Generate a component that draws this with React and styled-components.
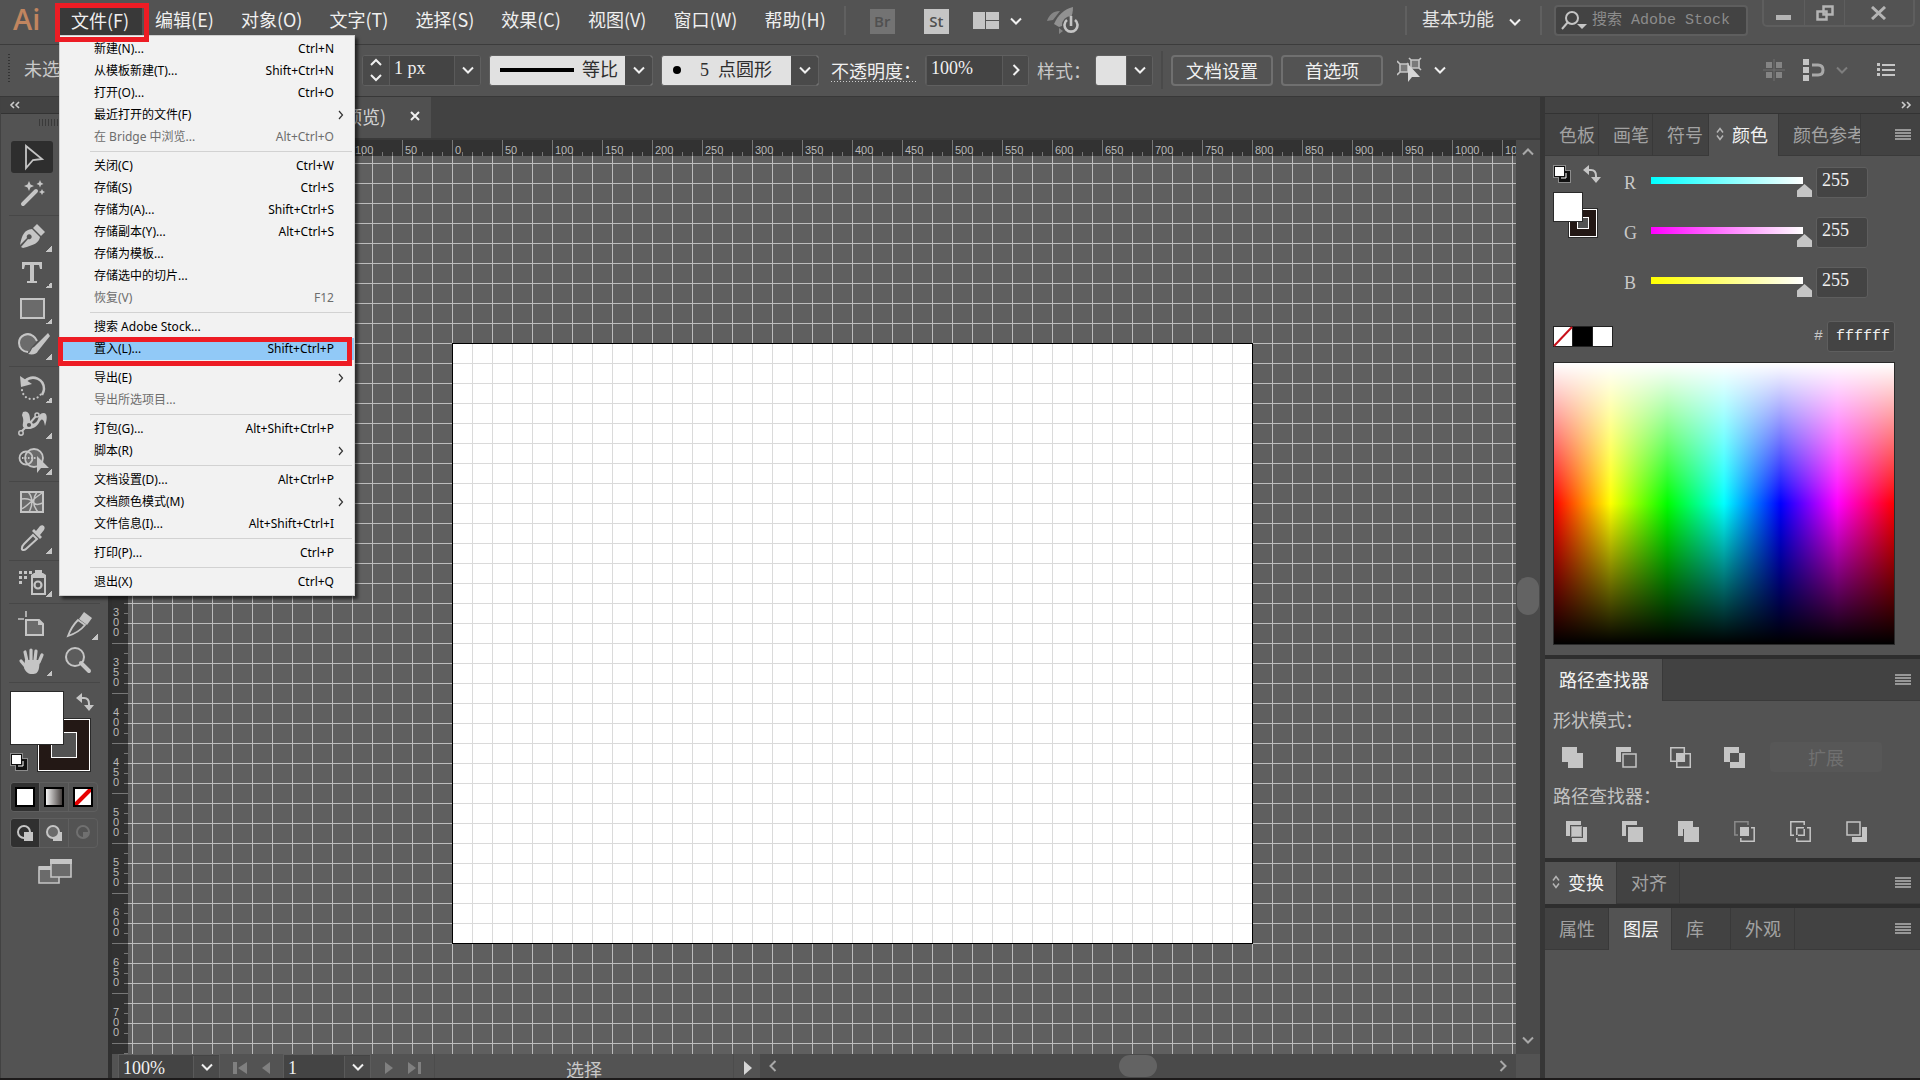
import React, { useState } from 'react';
import styled, { createGlobalStyle, css } from 'styled-components';

const FILE_MENU = [
  [
    { label: '新建(N)...', keys: 'Ctrl+N' },
    { label: '从模板新建(T)...', keys: 'Shift+Ctrl+N' },
    { label: '打开(O)...', keys: 'Ctrl+O' },
    { label: '最近打开的文件(F)', sub: true },
    { label: '在 Bridge 中浏览...', keys: 'Alt+Ctrl+O', off: true },
  ],
  [
    { label: '关闭(C)', keys: 'Ctrl+W' },
    { label: '存储(S)', keys: 'Ctrl+S' },
    { label: '存储为(A)...', keys: 'Shift+Ctrl+S' },
    { label: '存储副本(Y)...', keys: 'Alt+Ctrl+S' },
    { label: '存储为模板...' },
    { label: '存储选中的切片...' },
    { label: '恢复(V)', keys: 'F12', off: true },
  ],
  [
    { label: '搜索 Adobe Stock...' },
    { label: '置入(L)...', keys: 'Shift+Ctrl+P', marked: true },
  ],
  [
    { label: '导出(E)', sub: true },
    { label: '导出所选项目...', off: true },
  ],
  [
    { label: '打包(G)...', keys: 'Alt+Shift+Ctrl+P' },
    { label: '脚本(R)', sub: true },
  ],
  [
    { label: '文档设置(D)...', keys: 'Alt+Ctrl+P' },
    { label: '文档颜色模式(M)', sub: true },
    { label: '文件信息(I)...', keys: 'Alt+Shift+Ctrl+I' },
  ],
  [{ label: '打印(P)...', keys: 'Ctrl+P' }],
  [{ label: '退出(X)', keys: 'Ctrl+Q' }],
];

const MENUS = [
  '编辑(E)',
  '对象(O)',
  '文字(T)',
  '选择(S)',
  '效果(C)',
  '视图(V)',
  '窗口(W)',
  '帮助(H)',
];

const X_LABELS = Array.from({ length: 48 }, (_, i) => Math.abs(i * 50 - 350));
const Y_LABELS = Array.from({ length: 30 }, (_, i) => Math.abs(i * 50 - 150));

const CHANNELS = [
  { name: 'R', from: '#00ffff' },
  { name: 'G', from: '#ff00ff' },
  { name: 'B', from: '#ffff00' },
];

/* ---------- icons ---------- */

const Icon = ({ w, h, children, ...rest }) => (
  <svg width={w} height={h} viewBox={`0 0 ${w} ${h}`} fill='none' aria-hidden='true' {...rest}>
    {children}
  </svg>
);

const C = '#c5c5c5';

const Chevron = ({ color = '#f0f0f0' }) => (
  <Icon w={14} h={10}>
    <path d='M2 2.5l5 5 5-5' stroke={color} strokeWidth='2' />
  </Icon>
);

const ThinChevron = ({ turn = 0, color = '#a8a8a8' }) => (
  <Icon w={14} h={14}>
    <path d='M2 9.5l5-5 5 5' stroke={color} strokeWidth='2' transform={`rotate(${turn} 7 7)`} />
  </Icon>
);

const SwapIcon = () => (
  <Icon w={18} h={18}>
    <path d='M5 5h3q5 0 5 6v2' stroke={C} strokeWidth='2' />
    <path d='M0 5l6-5v10zM8 12h10l-5 6z' fill={C} />
  </Icon>
);

const DefaultsIcon = () => (
  <Icon w={18} h={18}>
    <path d='M0 0h13v5h5v13H5v-5H0z' fill='#8c8c8c' />
    <rect x='6' y='6' width='11' height='11' fill='#111' />
    <path d='M13 8v5H8' stroke='#fff' />
    <rect x='1' y='1' width='11' height='11' fill='#111' />
    <rect x='2' y='2' width='9' height='9' fill='#fff' />
  </Icon>
);

const ListIcon = () => (
  <Icon w={16} h={12}>
    <path d='M0 1h16M0 4h16M0 7h16M0 10h16' stroke='#b4b4b4' strokeWidth='1.4' />
  </Icon>
);

const TOOL_ART = {
  select: <path d='M12 6v22l7-8 9-1z' stroke={C} strokeWidth='1.8' />,
  wand: (
    <>
      <path d='M9 28L22 15' stroke={C} strokeWidth='4' strokeLinecap='round' />
      <path
        d='M15 5l1.5 3.5L20 10l-3.500 1.500L15 15l-1.500-3.500L10 10l3.500-1.500zM26 4l1 2.500L29.500 8 27 9l-1 2.500L25 9l-2.500-1L25 6.500zM28 13l1 2 2 1-2 1-1 2-1-2-2-1 2-1z'
        fill={C}
      />
    </>
  ),
  pen: (
    <>
      <path d='M23 5l8 8-4 4-8-8z' fill={C} />
      <path d='M18 10l8 8c-1 6-6 8-17 11L7 28l7-8a2.500 2.500 0 1 0-1-1l-7 7C8 16 10 11 18 10z' fill={C} />
    </>
  ),
  type: <path d='M8 7h20v7h-2l-1-4h-5v16h3v2h-10v-2h3V10h-5l-1 4H8z' fill={C} />,
  rect: <rect x='7' y='8' width='23' height='19' fill='#6b6b6b' stroke={C} strokeWidth='2' />,
  brush: (
    <>
      <path
        d='M15 25c-6 1-11-4-10-10 1-7 8-10 13-7 3 1 4 4 5 6l-6 7z'
        fill='#6b6b6b'
      />
      <path
        d='M14 25c-5 0-9-4-9-9 0-8 9-11 14-7 2 1 3 3 4 5'
        stroke={C}
        strokeWidth='2'
      />
      <path d='M34 6L20 20c-3 1-2 4-6 7 5 1 9 0 10-3L36 9z' fill={C} />
    </>
  ),
  rotate: (
    <>
      <path d='M11 11c8-7 19-2 19 8 0 2-1 4-2 6' stroke={C} strokeWidth='2.500' />
      <path d='M6 6l1 11 11-3z' fill={C} />
      <path
        d='M8 20c1 6 5 9 10 9 4 0 7-2 9-5'
        stroke={C}
        strokeWidth='2.200'
        strokeDasharray='0.100 4'
        strokeLinecap='round'
      />
    </>
  ),
  warp: (
    <>
      <path
        d='M9 6c4-2 7 1 7 7 0 4 2 6 5 4 5-3 2-10 9-10 4 1 3 7 1 13-1-7-3-8-5-5-2 4-5 8-12 8-4 0-6-2-5-6 1-5-1-7-1-8z'
        fill={C}
      />
      <path d='M7 26l8-8 8-9' stroke={C} strokeWidth='2' />
      <circle cx='7' cy='27' r='2.200' fill='#535353' stroke={C} strokeWidth='1.500' />
      <circle cx='15' cy='19' r='3' fill='#535353' stroke={C} strokeWidth='1.800' />
      <circle cx='23' cy='9' r='2' fill='#535353' stroke={C} strokeWidth='1.500' />
    </>
  ),
  builder: (
    <>
      <circle cx='20' cy='16' r='9' fill='#6b6b6b' stroke={C} strokeWidth='1.800' />
      <circle cx='12' cy='16' r='6.500' stroke={C} strokeWidth='1.800' />
      <path d='M8 16h15' stroke={C} strokeWidth='2' strokeDasharray='1.500 1.500' />
      <path d='M23 14v17l4-5h8z' fill={C} />
    </>
  ),
  mesh: (
    <>
      <rect x='7' y='7' width='22' height='20' fill='#6b6b6b' stroke={C} strokeWidth='2' />
      <path
        d='M7 14c7-1 11 1 13 4s5 1 9 0M14 7c5 5 5 13 1 20M23 7c-5 7-4 14 1 20M7 24c6-2 9-8 21-16'
        stroke={C}
        strokeWidth='1.500'
      />
    </>
  ),
  dropper: (
    <>
      <path d='M19 14l4 4-11 10c-2 2-5 1-4-1 0-2 1-3 2-4z' stroke={C} strokeWidth='2' />
      <path d='M18 10l2-2 2 2 4-5c3-2 6 1 4 4l-4 5 2 2-2 2z' fill={C} />
    </>
  ),
  spray: (
    <>
      <rect x='18' y='13' width='13' height='17' stroke={C} strokeWidth='2' />
      <path d='M17 13v-2l3-2h9l3 2v2zM21 6h7v4h-7z' fill={C} />
      <circle cx='24' cy='21' r='3.500' stroke={C} strokeWidth='2.200' />
      <path
        d='M5 7h3v3H5zM10 7h3v3h-3zM15 7h3v3h-3zM5 12h3v3H5zM10 12h3v3h-3zM5 17h3v3H5z'
        fill={C}
      />
    </>
  ),
  artboard: (
    <>
      <path d='M12 4v6M4 12h6' stroke={C} strokeWidth='1.600' />
      <path d='M12 13h13l4 4v11H12z' fill='#6b6b6b' stroke={C} strokeWidth='2' />
      <path d='M24 12v6h6z' fill={C} />
    </>
  ),
  slice: (
    <>
      <path d='M24 5l8 6-5 7-8-6z' fill={C} />
      <path d='M18 13l7 5c-4 5-8 8-17 11 3-8 6-12 10-16z' stroke={C} strokeWidth='1.800' />
    </>
  ),
  hand: (
    <>
      <path
        d='M13 18L11 9M17 17V7M21 17l1-9M25 19l3-7M12 24l-5-6'
        stroke={C}
        strokeWidth='3.200'
        strokeLinecap='round'
      />
      <path d='M11 17h15l-1 8c-1 5-3 6-7 6s-6-2-8-6z' fill={C} />
    </>
  ),
  zoom: (
    <>
      <circle cx='15' cy='14' r='9' fill='#5c5c5c' stroke={C} strokeWidth='2' />
      <path d='M21 20l8 8' stroke={C} strokeWidth='4' strokeLinecap='round' />
    </>
  ),
};

const ToolButton = ({ name, label, more, active }) => (
  <Tool type='button' aria-label={label} $active={active}>
    <Icon w={36} h={34}>{TOOL_ART[name]}</Icon>
    {more && <Corner />}
  </Tool>
);

const TOOLS = [
  [
    { name: 'select', label: '选择工具', active: true },
    { name: 'wand', label: '魔棒工具' },
  ],
  [
    { name: 'pen', label: '钢笔工具', more: true },
    { name: 'type', label: '文字工具', more: true },
    { name: 'rect', label: '矩形工具', more: true },
    { name: 'brush', label: '斑点画笔工具', more: true },
  ],
  [
    { name: 'rotate', label: '旋转工具', more: true },
    { name: 'warp', label: '宽度工具', more: true },
    { name: 'builder', label: '形状生成器工具', more: true },
  ],
  [
    { name: 'mesh', label: '网格工具' },
    { name: 'dropper', label: '吸管工具', more: true },
  ],
  [{ name: 'spray', label: '符号喷枪工具', more: true }],
];

const PATH_ART = {
  unite: <path d='M0 0h15v6h6v15H6v-6H0z' fill={C} />,
  minus: (
    <>
      <path d='M0 0h15v5H5v10H0z' fill={C} />
      <rect x='7' y='7' width='13' height='13' stroke={C} strokeWidth='1.500' />
    </>
  ),
  intersect: (
    <>
      <path d='M.8.8h13.500v13.500H.800zM6.800 6.800h13.500v13.500H6.800z' stroke={C} strokeWidth='1.500' />
      <rect x='6' y='6' width='9' height='9' fill={C} />
    </>
  ),
  exclude: <path d='M0 0h15v6h6v15H6v-6H0zM6 6v9h9V6z' fill={C} fillRule='evenodd' />,
  divide: (
    <>
      <path d='M0 0h15v4H4v11H0zM21 6h-4v11H6v4h15z' fill={C} />
      <rect x='5.500' y='5.500' width='10' height='10' fill={C} stroke='#a0a0a0' />
    </>
  ),
  trim: <path d='M0 0h15v4H4v11H0zM6 6h15v15H6z' fill={C} />,
  merge: <path d='M0 0h15v6h6v15H6V8H5v7H0z' fill={C} />,
  crop: (
    <>
      <path d='M14 4V.800H.800V14H4' stroke='#8a8a8a' strokeWidth='1.500' />
      <rect x='6' y='6' width='9' height='9' fill={C} />
      <path d='M17 6.800h3.200v13.400H6.800V17' stroke={C} strokeWidth='1.500' />
    </>
  ),
  outline: (
    <path
      d='M14.200 4V.800H.800v13.400H4M17 6.800h3.200v13.400H6.800V17M6.800 14V6.800H14M14.200 8v6.200H8'
      stroke={C}
      strokeWidth='1.500'
    />
  ),
  back: (
    <>
      <path d='M16 6h5v15H6v-5h10z' fill={C} />
      <rect x='1' y='1' width='13' height='13' fill='#535353' stroke={C} strokeWidth='1.500' />
    </>
  ),
};

const SHAPE_MODES = [
  ['unite', '联集'],
  ['minus', '减去顶层'],
  ['intersect', '交集'],
  ['exclude', '差集'],
];

const PATHFINDERS = [
  ['divide', '分割'],
  ['trim', '修边'],
  ['merge', '合并'],
  ['crop', '裁剪'],
  ['outline', '轮廓'],
  ['back', '减去后方对象'],
];

const DIAMOND = (
  <Icon w={8} h={14}>
    <path d='M1 5.500l3-4 3 4M1 8.500l3 4 3-4' stroke='#b4b4b4' strokeWidth='1.500' />
  </Icon>
);

/* ---------- page ---------- */

function FileMenu() {
  return (
    <Menu>
      {FILE_MENU.map((group, g) => (
        <MenuGroup key={g}>
          {group.map(item => (
            <MenuRow key={item.label} type='button' disabled={item.off} $marked={item.marked}>
              <span>{item.label}</span>
              {item.keys && <Keys>{item.keys}</Keys>}
              {item.sub && (
                <SubArrow>
                  <Icon w={6} h={10}>
                    <path d='M1 1l3.500 4L1 9' stroke='#333' strokeWidth='1.200' />
                  </Icon>
                </SubArrow>
              )}
            </MenuRow>
          ))}
        </MenuGroup>
      ))}
    </Menu>
  );
}

function TopBar() {
  return (
    <MenuBar>
      <Logo>Ai</Logo>
      <OpenMenuButton type='button'>文件(F)</OpenMenuButton>
      {MENUS.map(m => (
        <MenuButton key={m} type='button'>
          {m}
        </MenuButton>
      ))}
      <Divider $lead />
      <AppGroup>
        <AppBadge type='button' $dim>
          Br
        </AppBadge>
        <AppBadge type='button'>St</AppBadge>
        <PlainButton type='button' aria-label='排列文档'>
          <Icon w={26} h={18}>
            <path d='M0 0h12v17H0zM13 0h13v8H13zM13 9h13v8H13z' fill={C} />
          </Icon>
          <Chevron />
        </PlainButton>
        <PlainButton type='button' aria-label='GPU 性能'>
          <Icon w={32} h={28}>
            <path d='M26 0c-9 2-15 8-19 17l5 3 3-1c8-3 11-10 11-19z' fill='#919191' />
            <path d='M13 4C6 4 2 8 0 14l6-1zM12 21v6l4-3z' fill='#858585' />
            <circle cx='24' cy='18' r='9' fill='#535353' />
            <path d='M20 13a6.500 6.500 0 1 0 8 0M24 9v10' stroke={C} strokeWidth='2.600' />
          </Icon>
        </PlainButton>
      </AppGroup>
      <Spacer />
      <Divider />
      <Workspace>
        <select aria-label='工作区'>
          <option>基本功能</option>
        </select>
        <Chevron />
      </Workspace>
      <Divider />
      <Search>
        <Icon w={28} h={20}>
          <circle cx='12' cy='7' r='6' stroke={C} strokeWidth='2' />
          <path d='M8 11l-6 7' stroke={C} strokeWidth='2' />
          <path d='M17 13h10l-5 5z' fill={C} />
        </Icon>
        <input type='text' placeholder='搜索 Adobe Stock' aria-label='搜索 Adobe Stock' />
      </Search>
      <WindowButtons>
        <button type='button' aria-label='最小化'>
          <Icon w={16} h={14}>
            <path d='M0 9h15v5H0z' fill='#b4b4b4' />
          </Icon>
        </button>
        <button type='button' aria-label='还原'>
          <Icon w={18} h={16}>
            <path d='M7.500 1.500h9v8h-9zM1.500 6.500h9v8h-9z' stroke='#b4b4b4' strokeWidth='2.500' />
          </Icon>
        </button>
        <button type='button' aria-label='关闭'>
          <Icon w={16} h={14}>
            <path d='M1 1l13 12M14 1L1 13' stroke='#b4b4b4' strokeWidth='3' />
          </Icon>
        </button>
      </WindowButtons>
      <FileMenu />
    </MenuBar>
  );
}

function ControlBar() {
  return (
    <Controls>
      <Selection>
        <Grip />
        未选择对象
      </Selection>
      <Combo>
        <Stepper type='button' aria-label='调整描边粗细'>
          <Icon w={12} h={24}>
            <path d='M1 7l5-5 5 5M1 17l5 5 5-5' stroke='#f0f0f0' strokeWidth='2' />
          </Icon>
        </Stepper>
        <ComboInput $w={65} defaultValue='1 px' aria-label='描边粗细' />
        <ComboArrow type='button' aria-label='描边粗细列表'>
          <Chevron />
        </ComboArrow>
      </Combo>
      <LightSelect $w={164}>
        <Icon w={92} h={6}>
          <path d='M10 3h74' stroke='#000' strokeWidth='4' />
        </Icon>
        <select aria-label='宽度配置文件'>
          <option>等比</option>
        </select>
        <i>
          <Chevron />
        </i>
      </LightSelect>
      <LightSelect $w={158}>
        <Icon w={38} h={10}>
          <circle cx='15' cy='5' r='4' fill='#000' />
        </Icon>
        <select aria-label='画笔定义'>
          <option>5&ensp;点圆形</option>
        </select>
        <i>
          <Chevron />
        </i>
      </LightSelect>
      <Field $lead>
        <DottedLabel htmlFor='opacity'>不透明度：</DottedLabel>
        <Combo>
          <ComboInput $w={76} id='opacity' defaultValue='100%' />
          <ComboArrow type='button' aria-label='不透明度滑块'>
            <ThinChevron turn={90} color='#f0f0f0' />
          </ComboArrow>
        </Combo>
      </Field>
      <Field>
        <span>样式：</span>
        <Combo>
          <StyleSwatch />
          <ComboArrow type='button' aria-label='图形样式'>
            <Chevron />
          </ComboArrow>
        </Combo>
      </Field>
      <Divider $dark />
      <OutlineButton type='button'>文档设置</OutlineButton>
      <OutlineButton type='button'>首选项</OutlineButton>
      <PlainButton type='button' aria-label='选择相似对象' $lead>
        <Icon w={26} h={26}>
          <path d='M3 7h8v8H3zM14 3h8v8h-8z' fill='#7a7a7a' stroke={C} strokeWidth='1.600' />
          <path
            d='M0 4l3 3M0 18l3-3M11 7l-1-1M24 1l-2 2M12 1l2 2M24 13l-2-2'
            stroke={C}
            strokeWidth='1.600'
          />
          <path d='M11 7v18l4-5h8z' fill='#d6d6d6' />
        </Icon>
        <Chevron />
      </PlainButton>
      <Spacer />
      <RightIcons>
        <Icon w={22} h={22}>
          <path d='M3 3h6v6H3zM13 3h6v6h-6zM3 13h6v6H3zM13 13h6v6h-6z' fill='#848484' />
          <path d='M11 0v22M0 11h22' stroke='#707070' />
        </Icon>
        <PlainButton type='button' aria-label='对齐像素网格'>
          <Icon w={22} h={22}>
            <path d='M0 0h6v6H0zM0 8h6v6H0zM0 16h6v6H0z' fill={C} />
            <path d='M9 6h6q5 0 5 5t-5 5H9' stroke='#a8a8a8' strokeWidth='3' />
          </Icon>
          <Chevron color='#7e7e7e' />
        </PlainButton>
        <Icon w={18} h={14}>
          <path d='M0 0h3v3H0zM0 5h3v3H0zM0 10h3v3H0z' fill={C} />
          <path d='M5 2h13M5 7h13M5 12h13' stroke={C} strokeWidth='2' />
        </Icon>
      </RightIcons>
    </Controls>
  );
}

function ToolPanel() {
  return (
    <Tools>
      <PanelHead>
        <Icon w={12} h={8}>
          <path d='M5 1L2 4l3 3M10 1L7 4l3 3' stroke='#ccc' strokeWidth='1.600' />
        </Icon>
      </PanelHead>
      <GripRow />
      {TOOLS.map((group, i) => (
        <ToolGroup key={i}>
          {group.map(t => (
            <ToolButton key={t.name} {...t} />
          ))}
        </ToolGroup>
      ))}
      <ToolGroup $pairs>
        <ToolButton name='artboard' label='画板工具' />
        <ToolButton name='slice' label='切片工具' more />
        <ToolButton name='hand' label='抓手工具' more />
        <ToolButton name='zoom' label='缩放工具' />
      </ToolGroup>
      <Paint>
        <StrokeBox $size={52} $ring={12} />
        <FillBox $size={54} />
        <SwapSpot>
          <SwapIcon />
        </SwapSpot>
        <DefaultSpot>
          <DefaultsIcon />
        </DefaultSpot>
      </Paint>
      <ModeRow>
        <ModeCell type='button' aria-label='颜色' $active>
          <Icon w={20} h={20}>
            <path d='M1 1h18v18H1z' fill='#fff' stroke='#000' strokeWidth='2' />
          </Icon>
        </ModeCell>
        <ModeCell type='button' aria-label='渐变'>
          <Icon w={20} h={20}>
            <defs>
              <linearGradient id='toolGradient'>
                <stop offset='0' stopColor='#fff' />
                <stop offset='1' stopColor='#3a3432' />
              </linearGradient>
            </defs>
            <path d='M1 1h18v18H1z' fill='url(#toolGradient)' stroke='#000' strokeWidth='2' />
          </Icon>
        </ModeCell>
        <ModeCell type='button' aria-label='无'>
          <Icon w={20} h={20}>
            <path d='M1 1h18v18H1z' fill='#fff' />
            <path d='M2 18L18 2' stroke='#e60000' strokeWidth='4' />
            <path d='M1 1h18v18H1z' stroke='#000' strokeWidth='2' />
          </Icon>
        </ModeCell>
      </ModeRow>
      <ModeRow>
        <ModeCell type='button' aria-label='正常绘图' $active>
          <Icon w={18} h={18}>
            <circle cx='8' cy='8' r='6' stroke={C} strokeWidth='2' />
            <path d='M8 8h9v9H8z' fill={C} />
          </Icon>
        </ModeCell>
        <ModeCell type='button' aria-label='背面绘图'>
          <Icon w={18} h={18}>
            <path d='M8 8h9v9H8z' fill={C} />
            <circle cx='8' cy='8' r='6' fill='#6b6b6b' stroke={C} strokeWidth='2' />
          </Icon>
        </ModeCell>
        <ModeCell type='button' aria-label='内部绘图'>
          <Icon w={18} h={18}>
            <circle cx='9' cy='8' r='6' stroke='#707070' strokeWidth='2' />
            <path d='M9 8h6l-2 5-4 1z' fill='#707070' />
          </Icon>
        </ModeCell>
      </ModeRow>
      <ScreenMode type='button' aria-label='更改屏幕模式'>
        <Icon w={34} h={26}>
          <path d='M1 8h20v16H1z' fill='#6b6b6b' stroke={C} strokeWidth='1.600' />
          <path d='M1 7h20v4H1z' fill={C} />
          <path d='M13 1h20v17H13z' fill='#6b6b6b' stroke={C} strokeWidth='1.600' />
          <path d='M12 0h22v5H12z' fill={C} />
        </Icon>
      </ScreenMode>
    </Tools>
  );
}

function Document() {
  return (
    <Doc>
      <DocTabs>
        <DocTab>
          未标题-1 @ 100% (RGB/GPU 预览)
          <PlainButton type='button' aria-label='关闭文档'>
            <Icon w={10} h={10}>
              <path d='M1 1l8 8M9 1L1 9' stroke='#f0f0f0' strokeWidth='2' />
            </Icon>
          </PlainButton>
        </DocTab>
      </DocTabs>
      <Workarea>
        <RulerCorner />
        <RulerX>
          {X_LABELS.map((n, i) => (
            <span key={i}>{n}</span>
          ))}
        </RulerX>
        <VScroll>
          <ThinChevron />
          <VThumb />
          <ThinChevron turn={180} />
        </VScroll>
        <RulerY>
          {Y_LABELS.map((n, i) => (
            <span key={i}>
              {String(n)
                .split('')
                .map((d, k) => (
                  <b key={k}>{d}</b>
                ))}
            </span>
          ))}
        </RulerY>
        <Canvas>
          <Artboard />
        </Canvas>
      </Workarea>
      <Status>
        <StatusBox>
          <StatusInput $w={74} defaultValue='100%' aria-label='缩放' />
          <ComboArrow type='button' aria-label='缩放列表'>
            <Chevron />
          </ComboArrow>
        </StatusBox>
        <Pager>
          <Icon w={14} h={14}>
            <path d='M0 1h4v12H0zM14 1v12L5 7z' fill='#808080' />
          </Icon>
          <Icon w={10} h={14}>
            <path d='M9 1v12L1 7z' fill='#808080' />
          </Icon>
        </Pager>
        <StatusBox>
          <StatusInput $w={60} defaultValue='1' aria-label='画板' />
          <ComboArrow type='button' aria-label='画板列表'>
            <Chevron />
          </ComboArrow>
        </StatusBox>
        <Pager>
          <Icon w={10} h={14}>
            <path d='M1 1v12l8-6z' fill='#808080' />
          </Icon>
          <Icon w={14} h={14}>
            <path d='M0 1v12l8-6zM10 1h3v12h-3z' fill='#808080' />
          </Icon>
        </Pager>
        <StatusText>选择</StatusText>
        <PlayCell type='button' aria-label='状态栏菜单'>
          <Icon w={9} h={14}>
            <path d='M0 0v14l8-7z' fill='#d6d6d6' />
          </Icon>
        </PlayCell>
        <HScroll>
          <ThinChevron turn={-90} />
          <HThumb />
          <ThinChevron turn={90} />
        </HScroll>
      </Status>
    </Doc>
  );
}

function ColorPanel() {
  const [rgb, setRgb] = useState([255, 255, 255]);
  const setChannel = (i, v) => setRgb(rgb.map((old, k) => (k === i ? Number(v) || 0 : old)));
  const hex = rgb.map(v => v.toString(16).padStart(2, '0')).join('');

  return (
    <ColorBody>
      <ColorTop>
        <MiniPaint>
          <MiniIcons>
            <DefaultsIcon />
            <SwapIcon />
          </MiniIcons>
          <MiniBoxes>
            <StrokeBox $size={28} $ring={7} />
            <FillBox $size={30} />
          </MiniBoxes>
        </MiniPaint>
        <Channels>
          {CHANNELS.map((c, i) => (
            <Channel key={c.name}>
              <label htmlFor={`ch-${c.name}`}>{c.name}</label>
              <Slider
                type='range'
                min='0'
                max='255'
                aria-label={`${c.name} 滑块`}
                value={rgb[i]}
                onChange={e => setChannel(i, e.target.value)}
                $from={c.from}
              />
              <NumberBox
                id={`ch-${c.name}`}
                value={rgb[i]}
                onChange={e => setChannel(i, e.target.value)}
              />
            </Channel>
          ))}
        </Channels>
      </ColorTop>
      <HexRow>
        <Icon w={60} h={21}>
          <path d='M0 0h60v21H0z' fill='#222' />
          <path d='M1 1h18v19H1zM40 1h19v19H40z' fill='#fff' />
          <path d='M20 1h19v19H20z' fill='#000' />
          <path d='M1 20L19 1' stroke='#c8101a' strokeWidth='2' />
        </Icon>
        <Spacer />
        <label htmlFor='hex'>#</label>
        <HexBox id='hex' value={hex} readOnly />
      </HexRow>
      <Spectrum />
    </ColorBody>
  );
}

const MenuDots = () => (
  <PlainButton type='button' aria-label='面板菜单'>
    <ListIcon />
  </PlainButton>
);

function RightPanels() {
  return (
    <Side>
      <PanelHead $end>
        <Icon w={12} h={8}>
          <path d='M2 1l3 3-3 3M7 1l3 3-3 3' stroke='#ccc' strokeWidth='1.600' />
        </Icon>
      </PanelHead>
      <Panel>
        <Tabs>
          <Tab $w={54}>色板</Tab>
          <Tab $w={54}>画笔</Tab>
          <Tab $w={56}>符号</Tab>
          <Tab $w={70} $active $open>
            {DIAMOND}颜色
          </Tab>
          <Tab $w={82}>颜色参考</Tab>
          <MenuDots />
        </Tabs>
        <ColorPanel />
      </Panel>
      <Panel>
        <Tabs>
          <Tab $w={118} $active>
            路径查找器
          </Tab>
          <MenuDots />
        </Tabs>
        <PathBody>
          <h3>形状模式：</h3>
          <ShapeRow>
            {SHAPE_MODES.map(([k, label]) => (
              <PlainButton key={k} type='button' aria-label={label}>
                <Icon w={21} h={21}>{PATH_ART[k]}</Icon>
              </PlainButton>
            ))}
            <ExpandButton type='button' disabled>
              扩展
            </ExpandButton>
          </ShapeRow>
          <h3>路径查找器：</h3>
          <FinderRow>
            {PATHFINDERS.map(([k, label]) => (
              <PlainButton key={k} type='button' aria-label={label}>
                <Icon w={21} h={21}>{PATH_ART[k]}</Icon>
              </PlainButton>
            ))}
          </FinderRow>
        </PathBody>
      </Panel>
      <Panel>
        <Tabs>
          <Tab $w={72} $active $open>
            {DIAMOND}变换
          </Tab>
          <Tab $w={63}>对齐</Tab>
          <MenuDots />
        </Tabs>
      </Panel>
      <Panel $fill>
        <Tabs>
          <Tab $w={64}>属性</Tab>
          <Tab $w={63} $active>
            图层
          </Tab>
          <Tab $w={59}>库</Tab>
          <Tab $w={64}>外观</Tab>
          <MenuDots />
        </Tabs>
      </Panel>
    </Side>
  );
}

export default function App() {
  return (
    <Page>
      <GlobalStyle />
      <TopBar />
      <ControlBar />
      <Body>
        <ToolPanel />
        <Document />
        <RightPanels />
      </Body>
    </Page>
  );
}

/* ---------- styles ---------- */

const SANS = "'Noto Sans CJK SC', 'Noto Sans', sans-serif";
const NUM = "'Liberation Serif', 'Noto Sans CJK SC', serif";
const MONO = "'Liberation Mono', 'Noto Sans CJK SC', monospace";

const GlobalStyle = createGlobalStyle`
  * {
    box-sizing: border-box;
  }
  body {
    margin: 0;
    background: #535353;
    color: #c8c8c8;
    font: 18px/24px ${SANS};
  }
  button, input, select {
    margin: 0;
    padding: 0;
    border: 0;
    border-radius: 0;
    background: none;
    color: inherit;
    font: inherit;
    outline: none;
  }
  select {
    appearance: none;
  }
  svg {
    display: block;
    flex: none;
  }
`;

const Page = styled.div`
  display: flex;
  flex-direction: column;
  height: 100vh;
  overflow: hidden;
  border-bottom: 2px solid #1d1b1b;
`;

const Spacer = styled.div`
  flex: 1;
`;

const PlainButton = styled.button`
  display: flex;
  align-items: center;
  gap: 10px;
  padding-left: ${props => (props.$lead ? 6 : 0)}px;
`;

const MenuBar = styled.header`
  position: relative;
  z-index: 2;
  display: flex;
  flex: none;
  height: 45px;
  border-bottom: 1px solid #3c3c3c;
`;

const Logo = styled.div`
  width: 58px;
  padding-left: 13px;
  color: #c1855f;
  font: 600 29px/38px 'Open Sans', sans-serif;
`;

const MenuButton = styled.button`
  height: 35px;
  margin-right: 1px;
  padding: 0 13px;
  color: #efefef;
  line-height: 38px;
  white-space: nowrap;
`;

const OpenMenuButton = styled(MenuButton)`
  position: relative;
  height: 28px;
  margin: 8px 0 0;
  padding-bottom: 4px;
  background: #393939;
  line-height: 20px;

  &::after {
    content: '';
    position: absolute;
    z-index: 2;
    inset: -5px -7px -6px -3px;
    border: 5px solid #ed1c24;
  }
`;

const Divider = styled.div`
  flex: none;
  align-self: ${props => (props.$dark ? 'center' : 'flex-start')};
  width: 2px;
  height: ${props => (props.$dark ? 38 : 29)}px;
  margin-top: ${props => (props.$dark ? 0 : 6)}px;
  margin-left: ${props => (props.$lead ? 4 : 0)}px;
  background: ${props => (props.$dark ? '#4a4a4a' : '#606060')};
`;

const AppGroup = styled.div`
  display: flex;
  align-items: center;
  gap: 24px;
  height: 42px;
  padding-left: 24px;
`;

const AppBadge = styled.button`
  width: 25px;
  height: 25px;
  margin-right: ${props => (props.$dim ? 5 : 0)}px;
  background: ${props => (props.$dim ? '#737373' : '#c5c5c5')};
  color: #505050;
  font: 600 15px/25px 'Open Sans', sans-serif;
`;

const Workspace = styled.div`
  display: flex;
  align-items: center;
  gap: 14px;
  height: 36px;
  padding: 0 18px 0 15px;
  color: #e4e4e4;

  svg {
    margin-top: 8px;
  }
`;

const Search = styled.div`
  display: flex;
  align-items: center;
  gap: 4px;
  width: 194px;
  height: 31px;
  margin: 5px 14px 0 12px;
  padding-left: 4px;
  border: 2px solid #5e5e5e;
  border-radius: 4px;
  background: #434343;

  input {
    width: 100%;
    min-width: 0;
    font: 15px/24px ${MONO};
  }
  input::placeholder {
    color: #8c8c8c;
    opacity: 1;
  }
`;

const WindowButtons = styled.div`
  display: flex;
  height: 27px;
  margin-right: 5px;
  border: 2px solid #5e5e5e;
  border-top: 0;
  border-radius: 0 0 5px 5px;

  button {
    display: flex;
    align-items: center;
    justify-content: center;
    width: 40px;
  }
  button + button {
    border-left: 1px solid #5e5e5e;
  }
  button:last-child {
    width: 69px;
  }
`;

const Menu = styled.div`
  position: absolute;
  z-index: 1;
  top: 35px;
  left: 59px;
  width: 296px;
  padding: 2px 0;
  border: 1px solid #d0d0d0;
  background: #f2f2f2;
  box-shadow: 3px 3px 3px rgba(0, 0, 0, 0.55);
  color: #000;
  font: 12px/22px 'Noto Sans', 'Noto Sans CJK SC', sans-serif;
`;

const MenuGroup = styled.div`
  & + & {
    padding-top: 7px;
    background: linear-gradient(#d2d2d2, #d2d2d2) no-repeat 30px 3px / 262px 1px;
  }
`;

const MenuRow = styled.button`
  position: relative;
  display: flex;
  justify-content: space-between;
  width: 100%;
  height: 22px;
  padding: 0 20px 0 34px;
  white-space: nowrap;

  &:disabled {
    color: #6d6d6d;
  }

  ${props =>
    props.$marked &&
    css`
      background: #91c9f7;

      &::after {
        content: '';
        position: absolute;
        inset: -1px 2px -6px -2px;
        border: 5px solid #ed1c24;
      }
    `}
`;

const Keys = styled.kbd`
  font: inherit;
`;

const SubArrow = styled.span`
  margin: 6px -10px 0 0;
`;

const Controls = styled.div`
  display: flex;
  flex: none;
  align-items: center;
  gap: 8px;
  height: 52px;
  padding-bottom: 1px;
  border-bottom: 1px solid #383838;
`;

const Selection = styled.div`
  display: flex;
  align-items: center;
  gap: 14px;
  width: 354px;
  padding: 0 0 4px 8px;
`;

const Grip = styled.div`
  width: 2px;
  height: 28px;
  background: repeating-linear-gradient(#333 0 1px, transparent 1px 3px);
`;

const Combo = styled.div`
  display: flex;
  height: 31px;
  border: 1px solid #606060;
  border-radius: 3px;
  background: #444;
  overflow: hidden;
`;

const Stepper = styled.button`
  display: flex;
  align-items: center;
  justify-content: center;
  width: 26px;
  background: #4a4a4a;
`;

const ComboInput = styled.input`
  width: ${props => props.$w}px;
  padding: 0 0 4px 4px;
  border-left: 1px solid #5a5a5a;
  color: #f0f0f0;
  font: 18px/24px ${NUM};
`;

const ComboArrow = styled.button`
  display: flex;
  align-items: center;
  justify-content: center;
  width: 26px;
  border-left: 1px solid #5a5a5a;
  background: #4a4a4a;
`;

const LightSelect = styled.div`
  display: flex;
  align-items: center;
  width: ${props => props.$w}px;
  height: 31px;
  border: 1px solid #606060;
  border-radius: 3px;
  background: #e1e1e1;
  color: #2e2e2e;
  overflow: hidden;

  select {
    flex: 1;
    min-width: 0;
    font: 18px/28px ${NUM};
  }
  i {
    display: flex;
    align-items: center;
    justify-content: center;
    align-self: stretch;
    width: 27px;
    background: #4a4a4a;
  }
`;

const Field = styled.div`
  display: flex;
  align-items: center;
  gap: 4px;
  padding-left: ${props => (props.$lead ? 4 : 0)}px;
  white-space: nowrap;
`;

const DottedLabel = styled.label`
  color: #f0f0f0;
  background: repeating-linear-gradient(to right, #ccc 0 1px, transparent 1px 3px) no-repeat 0 100% / 86px 1px;
`;

const StyleSwatch = styled.div`
  width: 30px;
  background: #e1e1e1;
`;

const OutlineButton = styled.button`
  width: 102px;
  height: 31px;
  border: 2px solid #707070;
  border-radius: 4px;
  color: #f0f0f0;
`;

const RightIcons = styled.div`
  display: flex;
  align-items: center;
  gap: 18px;
  padding-right: 25px;

  ${PlainButton} {
    margin-right: 10px;
  }
`;

const Body = styled.main`
  display: flex;
  flex: 1;
  min-height: 0;
`;

const PanelHead = styled.div`
  display: flex;
  align-items: center;
  justify-content: ${props => (props.$end ? 'flex-end' : 'flex-start')};
  height: 17px;
  padding: 0 8px;
  border-bottom: 1px solid #333;
  background: #434343;
`;

const Tools = styled.aside`
  flex: none;
  width: 112px;
  border-left: 1px solid #424242;
  border-right: 4px solid #303030;
`;

const GripRow = styled.div`
  width: 32px;
  height: 7px;
  margin: 5px 0 14px 38px;
  background: repeating-linear-gradient(to right, #3a3a3a 0 1px, transparent 1px 3px);
`;

const ToolGroup = styled.div`
  display: grid;
  grid-template-columns: ${props => (props.$pairs ? '46px 46px' : '46px')};
  grid-auto-rows: 36px;
  margin: 0 8px;
  padding-bottom: 7px;
  background: linear-gradient(#474747, #474747) no-repeat 0 calc(100% - 3px) / 100% 1px;
`;

const Tool = styled.button`
  position: relative;
  display: flex;
  align-items: center;
  justify-content: center;
  width: 42px;
  height: 32px;
  margin: 1px 2px 3px;
  border-radius: 3px;
  background: ${props => (props.$active ? '#2e2e2e' : 'none')};
`;

const Corner = styled.span`
  position: absolute;
  right: 1px;
  bottom: 0;
  width: 6px;
  height: 6px;
  background: linear-gradient(135deg, transparent 50%, #c5c5c5 50%);
`;

const Paint = styled.div`
  position: relative;
  width: 88px;
  height: 80px;
  margin: 5px 0 11px 9px;
`;

const FillBox = styled.div`
  position: absolute;
  top: 0;
  left: 0;
  width: ${props => props.$size}px;
  height: ${props => props.$size}px;
  border: 1px solid #2a2a2a;
  background: #fff;
`;

const StrokeBox = styled.div`
  position: absolute;
  right: ${props => (props.$size > 40 ? 8 : 0)}px;
  bottom: 0;
  width: ${props => props.$size}px;
  height: ${props => props.$size}px;
  border: 1px solid #fff;
  background: #231815;
  outline: 1px solid #2a2a2a;

  &::after {
    content: '';
    position: absolute;
    inset: ${props => props.$ring}px;
    border: 1px solid #fff;
    background: #535353;
  }
`;

const SwapSpot = styled.div`
  position: absolute;
  top: 2px;
  right: 4px;
`;

const DefaultSpot = styled.div`
  position: absolute;
  bottom: 0;
  left: 0;
`;

const ModeRow = styled.div`
  display: flex;
  width: 88px;
  height: 30px;
  margin: 0 0 6px 9px;
  border: 1px solid #5f5f5f;
  border-radius: 4px;
  overflow: hidden;
`;

const ModeCell = styled.button`
  display: flex;
  flex: 1;
  align-items: center;
  justify-content: center;
  background: ${props => (props.$active ? '#303030' : 'none')};

  & + & {
    border-left: 1px solid #5f5f5f;
  }
`;

const ScreenMode = styled.button`
  display: block;
  margin: 11px 0 0 37px;
`;

const Doc = styled.section`
  display: flex;
  flex: 1;
  flex-direction: column;
  min-width: 0;
`;

const DocTabs = styled.div`
  flex: none;
  height: 43px;
  border-bottom: 2px solid #3a3a3a;
  background: #424242;
`;

const DocTab = styled.div`
  display: flex;
  align-items: center;
  justify-content: flex-end;
  gap: 24px;
  width: 319px;
  height: 41px;
  padding: 0 11px 3px 0;
  background: #505050;
  color: #d2d2d2;
  white-space: nowrap;
`;

const Workarea = styled.div`
  display: grid;
  flex: 1;
  grid-template-columns: 16px 1fr 24px;
  grid-template-rows: 16px 1fr;
  min-height: 0;
`;

const RulerCorner = styled.div`
  background: #323232;
`;

const RulerX = styled.div`
  display: flex;
  min-width: 0;
  padding: 0;
  overflow: hidden;
  background:
    repeating-linear-gradient(to right, #777 0 1px, transparent 1px 10px) no-repeat 4px 12px / 100% 4px,
    #323232;
  color: #b9b9b9;
  font: 11px/20px 'Liberation Sans', sans-serif;

  span {
    flex: none;
    width: 50px;
    padding-left: 2px;
    border-left: 1px solid #777;
  }
  span:first-child {
    margin-left: -26px;
  }
`;

const RulerY = styled.div`
  min-height: 0;
  overflow: hidden;
  background:
    repeating-linear-gradient(#777 0 1px, transparent 1px 10px) no-repeat 12px 7px / 4px 100%,
    #323232;
  color: #b9b9b9;
  font: 11px/10px 'Liberation Sans', sans-serif;

  span {
    display: flex;
    flex-direction: column;
    justify-content: flex-end;
    height: 50px;
    padding: 0 0 6px 1px;
    border-bottom: 1px solid #777;
  }
  span:first-child {
    margin-top: -12px;
  }
  b {
    font-weight: normal;
  }
`;

const Canvas = styled.div`
  position: relative;
  overflow: hidden;
  background:
    linear-gradient(to right, #bcbcbc 1px, transparent 1px) 4px 7px / 20px 20px,
    linear-gradient(#bcbcbc 1px, transparent 1px) 4px 7px / 20px 20px,
    #5f5f5f;
`;

const Artboard = styled.div`
  position: absolute;
  top: 187px;
  left: 324px;
  width: 801px;
  height: 601px;
  border: 1px solid #000;
  background:
    linear-gradient(to right, #dadada 1px, transparent 1px) 19px 19px / 20px 20px,
    linear-gradient(#dadada 1px, transparent 1px) 19px 19px / 20px 20px,
    #fff;
`;

const VScroll = styled.div`
  display: flex;
  grid-row: 1 / 3;
  grid-column: 3;
  flex-direction: column;
  align-items: center;
  justify-content: space-between;
  padding: 5px 0 7px;
  background: #4a4a4a;
`;

const VThumb = styled.div`
  width: 22px;
  height: 38px;
  border-radius: 11px;
  background: #636363;
`;

const Status = styled.footer`
  display: flex;
  flex: none;
  height: 24px;
  padding: 0 24px 0 6px;
  background: #535353;
`;

const StatusBox = styled.div`
  display: flex;
  padding-top: 1px;
  border: 1px solid #5c5c5c;
  border-bottom: 0;
  background: #444;
`;

const StatusInput = styled.input`
  width: ${props => props.$w}px;
  padding: 2px 0 0 4px;
  color: #f0f0f0;
  font: 18px/20px ${NUM};
`;

const Pager = styled.div`
  display: flex;
  align-items: center;
  justify-content: center;
  gap: 14px;
  width: 63px;
  padding-top: 4px;
`;

const StatusText = styled.div`
  width: 300px;
  border: 1px solid #4c4c4c;
  border-width: 0 1px;
  line-height: 30px;
  text-align: center;
`;

const PlayCell = styled.button`
  display: flex;
  align-items: center;
  justify-content: center;
  width: 26px;
  padding: 4px 0 0 2px;
`;

const HScroll = styled.div`
  display: flex;
  flex: 1;
  align-items: center;
  justify-content: space-between;
  padding: 0 6px;
  background: #4a4a4a;
`;

const HThumb = styled.div`
  width: 38px;
  height: 22px;
  border-radius: 11px;
  background: #636363;
`;

const Side = styled.aside`
  display: flex;
  flex: none;
  flex-direction: column;
  width: 380px;
  border-left: 5px solid #363636;
`;

const Panel = styled.section`
  flex: ${props => (props.$fill ? 1 : 'none')};

  & + & {
    border-top: 4px solid #2e2e2e;
  }
`;

const Tabs = styled.div`
  display: flex;
  height: 42px;
  border-bottom: 1px solid #3a3a3a;
  background: #424242;

  ${PlainButton} {
    margin: 0 9px 0 auto;
  }
`;

const Tab = styled.button`
  display: flex;
  align-items: center;
  gap: 8px;
  width: ${props => props.$w}px;
  height: 42px;
  padding: 0 0 3px ${props => (props.$open ? 7 : 14)}px;
  overflow: hidden;
  border-right: 1px solid #393939;
  background: ${props => (props.$active ? '#535353' : 'none')};
  color: ${props => (props.$active ? '#f2f2f2' : '#a2a2a2')};
  white-space: nowrap;
`;

const ColorBody = styled.div`
  padding: 9px 25px 10px 8px;
`;

const ColorTop = styled.div`
  display: flex;
  justify-content: space-between;
  padding-right: 27px;
`;

const MiniPaint = styled.div`
  display: flex;
  flex-direction: column;
  gap: 9px;
`;

const MiniIcons = styled.div`
  display: flex;
  align-items: center;
  gap: 12px;
`;

const MiniBoxes = styled.div`
  position: relative;
  width: 44px;
  height: 45px;
`;

const Channels = styled.div`
  display: flex;
  flex-direction: column;
  gap: 19px;
  padding-top: 2px;
`;

const Channel = styled.div`
  display: flex;
  align-items: center;
  font: 18px/24px ${NUM};

  label {
    width: 20px;
  }
`;

const Slider = styled.input`
  align-self: flex-end;
  width: 168px;
  height: 21px;
  margin-right: 4px;
  appearance: none;

  &::-webkit-slider-runnable-track {
    height: 21px;
    background: linear-gradient(to right, ${props => props.$from}, #fff) no-repeat 7px 0 / calc(100% - 16px) 7px;
  }
  &::-webkit-slider-thumb {
    width: 15px;
    height: 13px;
    margin-top: 7px;
    background: #c5c5c5;
    appearance: none;
    clip-path: polygon(50% 0, 100% 50%, 100% 100%, 0 100%, 0 50%);
  }
`;

const NumberBox = styled.input`
  width: 52px;
  height: 31px;
  padding: 0 0 5px 5px;
  border: 1px solid #5e5e5e;
  border-radius: 3px;
  background: #444;
  color: #f0f0f0;
`;

const HexRow = styled.div`
  display: flex;
  align-items: center;
  gap: 4px;
  margin: 23px 0 10px;
  font: 15px/24px ${MONO};
`;

const HexBox = styled.input`
  width: 68px;
  height: 31px;
  padding: 0 0 0 8px;
  border: 1px solid #5e5e5e;
  border-radius: 3px;
  background: #444;
  color: #f0f0f0;
`;

const Spectrum = styled.div`
  height: 283px;
  border: 1px solid #2a2a2a;
  background:
    linear-gradient(#fff, rgba(255, 255, 255, 0) 50%, rgba(0, 0, 0, 0) 50%, #000),
    linear-gradient(to right, #f00, #ff0, #0f0, #0ff, #00f, #f0f, #f00);
`;

const PathBody = styled.div`
  padding: 6px 8px 16px;

  h3 {
    margin: 0;
    color: #c2c2c2;
    font: 18px/24px ${SANS};
  }
`;

const ShapeRow = styled.div`
  display: flex;
  align-items: center;
  gap: 33px;
  height: 52px;
  padding-left: 9px;
`;

const ExpandButton = styled.button`
  width: 112px;
  height: 30px;
  margin-left: -8px;
  border-radius: 4px;
  background: #575757;
  color: #707070;
`;

const FinderRow = styled.div`
  display: flex;
  gap: 35px;
  padding: 14px 0 0 13px;
`;
